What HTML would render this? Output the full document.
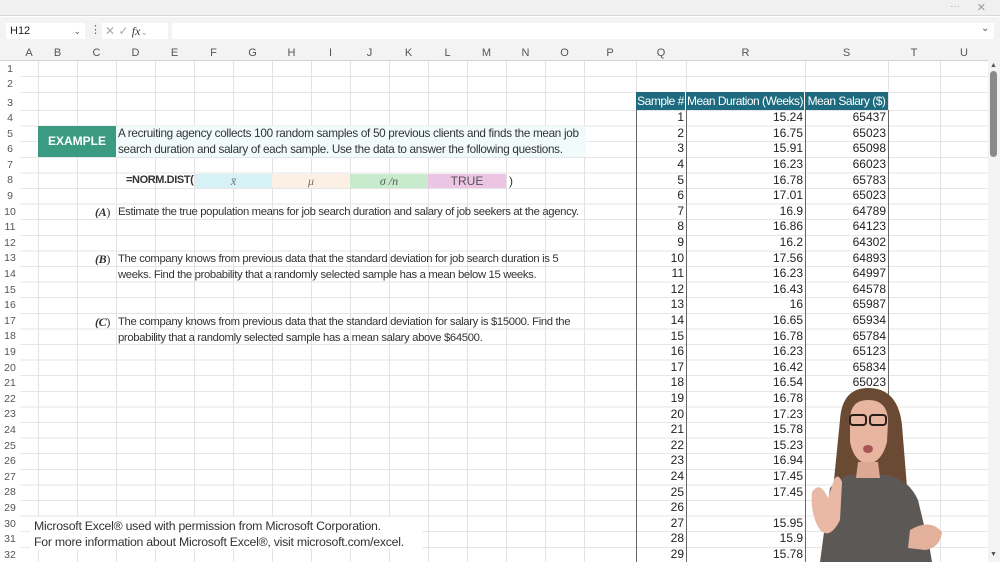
<!DOCTYPE html>
<html><head><meta charset="utf-8"><style>
*{margin:0;padding:0;box-sizing:border-box}
body{width:1000px;height:562px;overflow:hidden;background:#fff;font-family:"Liberation Sans",sans-serif;position:relative;color:#222}
.a{position:absolute}
.vl{position:absolute;top:61px;bottom:0;width:1px;background:#e3e3e3}
.ch{position:absolute;top:45px;height:16px;font-size:11px;color:#555;text-align:center;line-height:16px}
.rh{position:absolute;left:0;width:20px;font-size:10.5px;color:#555;text-align:center}
.q{position:absolute;font-size:11.3px;color:#333;white-space:nowrap;letter-spacing:-0.35px}
.tb{position:absolute;left:636px;top:110px;border-collapse:collapse;font-size:12px;color:#222}
.tb td{height:15.6px;line-height:15px;padding:0 2px;text-align:right;border-left:1px solid #666;border-right:1px solid #666}
.th{position:absolute;top:92px;height:18px;color:#fff;font-size:12px;line-height:18px;text-align:center;white-space:nowrap;letter-spacing:-0.5px;overflow:hidden}
</style></head><body>
<div class="a" style="left:0;top:0;width:1000px;height:16px;background:#f0f0f0;border-bottom:1px solid #d8d8d8"></div>
<div class="a" style="right:40px;top:1px;font-size:10px;color:#aaa">···</div>
<div class="a" style="right:14px;top:1px;font-size:11px;color:#999">✕</div>
<div class="a" style="left:0;top:17px;width:1000px;height:44px;background:#f3f3f3"></div>
<div class="a" style="left:6px;top:23px;width:79px;height:16px;background:#fff;font-size:11px;line-height:16px;padding-left:4px">H12<span style="position:absolute;right:4px;color:#555;font-size:9px">⌄</span></div>
<div class="a" style="left:90px;top:23px;font-size:11px;color:#666">⋮</div>
<div class="a" style="left:102px;top:23px;width:66px;height:16px;background:#fff;font-size:12px;color:#aaa;line-height:16px;padding-left:3px">✕ ✓ <i style="font-family:'Liberation Serif',serif;color:#333">fx</i><span style="font-size:9px">⌄</span></div>
<div class="a" style="left:172px;top:23px;width:822px;height:16px;background:#fff"></div>
<div class="a" style="left:981px;top:23px;font-size:10px;color:#555">⌄</div>
<div class="a" style="left:0;top:45px;width:988px;height:16px;background:#f3f3f3;border-bottom:1px solid #d4d4d4"></div>
<div class="ch" style="left:20px;width:18px">A</div><div class="ch" style="left:38px;width:39px">B</div><div class="ch" style="left:77px;width:39px">C</div><div class="ch" style="left:116px;width:39px">D</div><div class="ch" style="left:155px;width:39px">E</div><div class="ch" style="left:194px;width:39px">F</div><div class="ch" style="left:233px;width:39px">G</div><div class="ch" style="left:272px;width:39px">H</div><div class="ch" style="left:311px;width:39px">I</div><div class="ch" style="left:350px;width:39px">J</div><div class="ch" style="left:389px;width:39px">K</div><div class="ch" style="left:428px;width:39px">L</div><div class="ch" style="left:467px;width:39px">M</div><div class="ch" style="left:506px;width:39px">N</div><div class="ch" style="left:545px;width:39px">O</div><div class="ch" style="left:584px;width:52px">P</div><div class="ch" style="left:636px;width:50px">Q</div><div class="ch" style="left:686px;width:119px">R</div><div class="ch" style="left:805px;width:83px">S</div><div class="ch" style="left:888px;width:52px">T</div><div class="ch" style="left:940px;width:48px">U</div>
<div class="a" style="left:20px;top:76px;width:968px;height:1px;background:#e6e6e6"></div>
<div class="a" style="left:20px;top:92px;width:968px;height:1px;background:#e6e6e6"></div>
<div class="a" style="left:20px;top:110px;width:968px;height:452px;background:repeating-linear-gradient(to bottom,#e6e6e6 0,#e6e6e6 1px,transparent 1px,transparent 15.6px)"></div>
<div class="vl" style="left:38px"></div><div class="vl" style="left:77px"></div><div class="vl" style="left:116px"></div><div class="vl" style="left:155px"></div><div class="vl" style="left:194px"></div><div class="vl" style="left:233px"></div><div class="vl" style="left:272px"></div><div class="vl" style="left:311px"></div><div class="vl" style="left:350px"></div><div class="vl" style="left:389px"></div><div class="vl" style="left:428px"></div><div class="vl" style="left:467px"></div><div class="vl" style="left:506px"></div><div class="vl" style="left:545px"></div><div class="vl" style="left:584px"></div><div class="vl" style="left:636px"></div><div class="vl" style="left:686px"></div><div class="vl" style="left:805px"></div><div class="vl" style="left:888px"></div><div class="vl" style="left:940px"></div>
<div class="rh" style="top:63px">1</div><div class="rh" style="top:78px">2</div><div class="rh" style="top:97px">3</div>
<div class="rh" style="top:112px">4</div><div class="rh" style="top:127.6px">5</div><div class="rh" style="top:143.2px">6</div><div class="rh" style="top:158.8px">7</div><div class="rh" style="top:174.4px">8</div><div class="rh" style="top:190px">9</div><div class="rh" style="top:205.6px">10</div><div class="rh" style="top:221.2px">11</div><div class="rh" style="top:236.8px">12</div><div class="rh" style="top:252.4px">13</div><div class="rh" style="top:268px">14</div><div class="rh" style="top:283.6px">15</div><div class="rh" style="top:299.2px">16</div><div class="rh" style="top:314.8px">17</div><div class="rh" style="top:330.4px">18</div><div class="rh" style="top:346px">19</div><div class="rh" style="top:361.6px">20</div><div class="rh" style="top:377.2px">21</div><div class="rh" style="top:392.8px">22</div><div class="rh" style="top:408.4px">23</div><div class="rh" style="top:424px">24</div><div class="rh" style="top:439.6px">25</div><div class="rh" style="top:455.2px">26</div><div class="rh" style="top:470.8px">27</div><div class="rh" style="top:486.4px">28</div><div class="rh" style="top:502px">29</div><div class="rh" style="top:517.6px">30</div><div class="rh" style="top:533.2px">31</div><div class="rh" style="top:548.8px">32</div>
<div class="a" style="left:38px;top:126px;width:78px;height:31px;background:#3a9a82;color:#fff;font-weight:bold;font-size:12px;text-align:center;line-height:31px">EXAMPLE</div>
<div class="a" style="left:116px;top:126px;width:470px;height:31px;background:#f1fbfb"></div>
<div class="q" style="left:118px;top:126px;font-size:11.7px;line-height:15.6px;letter-spacing:-0.3px">A recruiting agency collects 100 random samples of 50 previous clients and finds the mean job<br>search duration and salary of each sample. Use the data to answer the following questions.</div>
<div class="q" style="left:126px;top:174px;font-weight:bold;font-size:11px;letter-spacing:-0.4px">=NORM.DIST(</div>
<div class="a" style="left:195px;top:174px;width:77px;height:14px;background:#d6f2f7;text-align:center;font-family:'Liberation Serif',serif;font-style:italic;font-size:12px;color:#666;line-height:14px">x̄</div>
<div class="a" style="left:272px;top:174px;width:78px;height:14px;background:#fcefe4;text-align:center;font-family:'Liberation Serif',serif;font-style:italic;font-size:12px;color:#777;line-height:14px">μ</div>
<div class="a" style="left:350px;top:174px;width:78px;height:14px;background:#c8ebce;text-align:center;font-family:'Liberation Serif',serif;font-style:italic;font-size:12px;color:#555;line-height:14px">σ /n</div>
<div class="a" style="left:428px;top:174px;width:78px;height:14px;background:#ecc4e4;text-align:center;font-size:12px;color:#555;line-height:14px">TRUE</div>
<div class="q" style="left:509px;top:174px;font-size:12px">)</div>
<div class="q" style="left:95px;top:205px;font-family:'Liberation Serif',serif;font-size:12px"><b><i>(A</i></b>)</div>
<div class="q" style="left:118px;top:206px">Estimate the true population means for job search duration and salary of job seekers at the agency.</div>
<div class="q" style="left:95px;top:252px;font-family:'Liberation Serif',serif;font-size:12px"><b><i>(B</i></b>)</div>
<div class="q" style="left:118px;top:252px;line-height:15.6px">The company knows from previous data that the standard deviation for job search duration is 5<br>weeks. Find the probability that a randomly selected sample has a mean below 15 weeks.</div>
<div class="q" style="left:95px;top:315px;font-family:'Liberation Serif',serif;font-size:12px"><b><i>(C</i></b>)</div>
<div class="q" style="left:118px;top:315px;line-height:15.6px">The company knows from previous data that the standard deviation for salary is $15000. Find the<br>probability that a randomly selected sample has a mean salary above $64500.</div>
<div class="a" style="left:636px;top:92px;width:252px;height:18px;background:#1e6b7f"></div>
<div class="th" style="left:636px;width:50px;border-right:1px solid #fff">Sample #</div>
<div class="th" style="left:686px;width:119px;border-right:1px solid #fff">Mean Duration (Weeks)</div>
<div class="th" style="left:805px;width:83px">Mean Salary ($)</div>
<table class="tb"><colgroup><col style="width:50px"><col style="width:119px"><col style="width:83px"></colgroup>
<tr><td>1</td><td>15.24</td><td>65437</td></tr><tr><td>2</td><td>16.75</td><td>65023</td></tr><tr><td>3</td><td>15.91</td><td>65098</td></tr><tr><td>4</td><td>16.23</td><td>66023</td></tr><tr><td>5</td><td>16.78</td><td>65783</td></tr><tr><td>6</td><td>17.01</td><td>65023</td></tr><tr><td>7</td><td>16.9</td><td>64789</td></tr><tr><td>8</td><td>16.86</td><td>64123</td></tr><tr><td>9</td><td>16.2</td><td>64302</td></tr><tr><td>10</td><td>17.56</td><td>64893</td></tr><tr><td>11</td><td>16.23</td><td>64997</td></tr><tr><td>12</td><td>16.43</td><td>64578</td></tr><tr><td>13</td><td>16</td><td>65987</td></tr><tr><td>14</td><td>16.65</td><td>65934</td></tr><tr><td>15</td><td>16.78</td><td>65784</td></tr><tr><td>16</td><td>16.23</td><td>65123</td></tr><tr><td>17</td><td>16.42</td><td>65834</td></tr><tr><td>18</td><td>16.54</td><td>65023</td></tr><tr><td>19</td><td>16.78</td><td>65320</td></tr><tr><td>20</td><td>17.23</td><td></td></tr><tr><td>21</td><td>15.78</td><td></td></tr><tr><td>22</td><td>15.23</td><td></td></tr><tr><td>23</td><td>16.94</td><td></td></tr><tr><td>24</td><td>17.45</td><td></td></tr><tr><td>25</td><td>17.45</td><td></td></tr><tr><td>26</td><td></td><td></td></tr><tr><td>27</td><td>15.95</td><td></td></tr><tr><td>28</td><td>15.9</td><td></td></tr><tr><td>29</td><td>15.78</td><td></td></tr>
</table>
<div class="a" style="left:30px;top:517px;width:392px;height:32px;background:#fff"></div>
<div class="a" style="left:34px;top:518px;font-size:12.3px;color:#333;line-height:16px;letter-spacing:-0.25px;white-space:nowrap">Microsoft Excel® used with permission from Microsoft Corporation.<br>For more information about Microsoft Excel®, visit microsoft.com/excel.</div>
<div class="a" style="left:988px;top:61px;width:12px;height:501px;background:#f3f3f3"></div>
<div class="a" style="left:990px;top:62px;font-size:7px;color:#555">▲</div>
<div class="a" style="left:990px;top:71px;width:7px;height:86px;background:#8a8a8a;border-radius:4px"></div>
<div class="a" style="left:990px;top:551px;font-size:7px;color:#555">▼</div>
<svg class="a" style="left:790px;top:380px" width="170" height="182" viewBox="0 0 170 182">
<path d="M50 40 Q52 8 78 8 Q108 8 112 45 L118 120 Q125 160 120 182 L45 182 Q38 140 44 100 Z" fill="#6b4a33"/>
<path d="M30 182 L40 108 Q55 92 70 95 L95 95 Q118 98 128 120 L140 170 L142 182 Z" fill="#5b5856"/>
<path d="M60 40 Q60 20 78 20 Q98 20 98 42 L97 62 Q92 82 78 84 Q64 82 60 62 Z" fill="#e7b5a0"/>
<path d="M68 82 L88 82 L90 98 L66 98 Z" fill="#dca894"/>
<rect x="60" y="35" width="16" height="10" rx="3" fill="none" stroke="#2a1e1a" stroke-width="2"/>
<rect x="80" y="35" width="16" height="10" rx="3" fill="none" stroke="#2a1e1a" stroke-width="2"/>
<ellipse cx="78" cy="69" rx="5" ry="4" fill="#a55"/>
<path d="M22 112 Q30 100 38 118 L44 100 Q48 92 52 102 L50 140 Q40 160 30 150 Q20 135 22 112 Z" fill="#e9b9a5"/>
<path d="M120 150 Q140 138 152 152 Q150 168 135 170 L118 168 Z" fill="#e3b09c"/>
</svg>
</body></html>
